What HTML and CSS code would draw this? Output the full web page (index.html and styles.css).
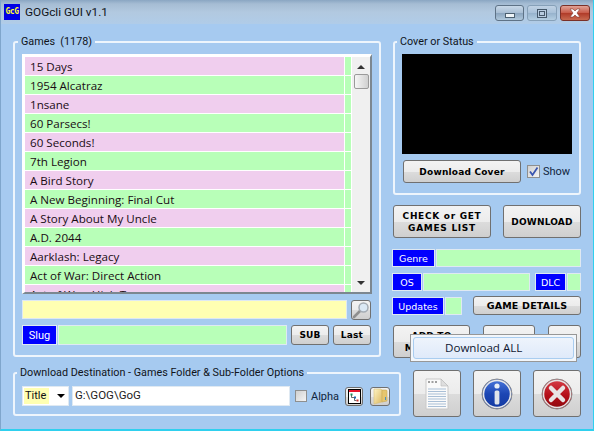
FILE: index.html
```html
<!DOCTYPE html>
<html lang="en">
<head>
<meta charset="utf-8">
<title>GOGcli GUI v1.1</title>
<link rel="stylesheet" href="styles.css">
</head>
<body>
<div class="window">
  <header class="titlebar">
    <span class="app-icon">GcG</span>
    <span class="title-text">GOGcli GUI v1.1</span>
    <div class="caption">
      <span class="cap cap-min"><i class="min-glyph"></i></span>
      <span class="cap cap-max"><i class="max-glyph"></i></span>
      <span class="cap cap-close">
        <svg width="18" height="10" viewBox="0 0 18 10"><path d="M4 1h3l2 2 2-2h3l-3 4 3 4h-3l-2-2-2 2H4l3-4z" fill="#fff" stroke="#7d3a30" stroke-width=".6"/></svg>
      </span>
    </div>
  </header>

  <main class="content">
    <div class="upper">
      <fieldset class="group games">
        <legend>Games&nbsp; (1178)</legend>
        <div class="listbox">
          <div class="rows">
            <div class="row pink"><span class="name">15 Days</span><span class="flag"></span></div>
            <div class="row green"><span class="name">1954 Alcatraz</span><span class="flag"></span></div>
            <div class="row pink"><span class="name">1nsane</span><span class="flag"></span></div>
            <div class="row green"><span class="name">60 Parsecs!</span><span class="flag"></span></div>
            <div class="row pink"><span class="name">60 Seconds!</span><span class="flag"></span></div>
            <div class="row green"><span class="name">7th Legion</span><span class="flag"></span></div>
            <div class="row pink"><span class="name">A Bird Story</span><span class="flag"></span></div>
            <div class="row green"><span class="name">A New Beginning: Final Cut</span><span class="flag"></span></div>
            <div class="row pink"><span class="name">A Story About My Uncle</span><span class="flag"></span></div>
            <div class="row green"><span class="name">A.D. 2044</span><span class="flag"></span></div>
            <div class="row pink"><span class="name">Aarklash: Legacy</span><span class="flag"></span></div>
            <div class="row green"><span class="name">Act of War: Direct Action</span><span class="flag"></span></div>
            <div class="row pink"><span class="name">Act of War: High Treason</span><span class="flag"></span></div>
          </div>
          <div class="scrollbar">
            <span class="arrow-up"></span>
            <span class="thumb"></span>
            <span class="arrow-down"></span>
          </div>
        </div>
        <div class="search-row">
          <div class="field yellow search-field"></div>
          <button class="btn search-btn" aria-label="Search">
            <svg width="18" height="18" viewBox="0 0 18 18"><path d="M2 16l6-6" stroke="#8f8f8f" stroke-width="2.600" stroke-linecap="round"/><circle cx="11.500" cy="6.500" r="4.500" fill="#dbe9f5" stroke="#a4acb4" stroke-width="1.500"/></svg>
          </button>
        </div>
        <div class="slug-row">
          <span class="tag slug-tag">Slug</span>
          <div class="field green-field slug-field"></div>
          <button class="btn small-btn">SUB</button>
          <button class="btn small-btn">Last</button>
        </div>
      </fieldset>

      <div class="side">
        <fieldset class="group cover">
          <legend>Cover or Status</legend>
          <div class="cover-image"></div>
          <div class="cover-row">
            <button class="btn cover-btn">Download Cover</button>
            <span class="check checked">
              <svg width="11" height="11" viewBox="0 0 11 11"><path d="M2 5.500l2.500 3.500L9.500 1.500" fill="none" stroke="#3a56b0" stroke-width="1.800"/></svg>
            </span>
            <span class="check-label">Show</span>
          </div>
        </fieldset>

        <div class="main-actions">
          <button class="btn check-btn">CHECK or GET<br>GAMES LIST</button>
          <button class="btn download-btn">DOWNLOAD</button>
        </div>

        <div class="info-row genre-row">
          <span class="tag genre-tag">Genre</span>
          <div class="field green-field grow"></div>
        </div>
        <div class="info-row os-row">
          <span class="tag os-tag">OS</span>
          <div class="field green-field grow"></div>
          <span class="tag dlc-tag">DLC</span>
          <div class="field green-field dlc-field"></div>
        </div>
        <div class="info-row updates-row">
          <span class="tag updates-tag">Updates</span>
          <div class="field green-field updates-field"></div>
          <button class="btn details-btn">GAME DETAILS</button>
        </div>

        <div class="extra-actions">
          <button class="btn add-btn">ADD TO<br>MANIFEST</button>
          <button class="btn mid-btn"></button>
          <button class="btn end-btn"></button>
          <div class="popup"><div class="popup-item">Download ALL</div></div>
        </div>
      </div>
    </div>

    <div class="lower">
      <fieldset class="group dest">
        <legend>Download Destination - Games Folder &amp; Sub-Folder Options</legend>
        <div class="dest-row">
          <div class="combo"><span class="combo-value">Title</span><span class="combo-arrow"></span></div>
          <div class="field white-field path-field">G:\GOG\GoG</div>
          <span class="check"></span>
          <span class="check-label alpha-label">Alpha</span>
          <button class="btn icon-btn tree-btn" aria-label="Tree">
            <svg class="btn-glyph" width="13" height="15" viewBox="0 0 13 15"><rect x=".5" y=".5" width="12" height="14" fill="#fff" stroke="#000"/><rect x="1" y="1" width="11" height="2" fill="#e8142c"/><path d="M3.500 6v2.500h3M6.500 8.500v3h2" stroke="#444" stroke-width=".8" fill="none"/><rect x="2.500" y="4.500" width="2" height="2" fill="#1a8a5a"/><rect x="6" y="7.500" width="2" height="2" fill="#1a6ab0"/><rect x="8.500" y="10.500" width="2" height="2" fill="#c83030"/></svg>
          </button>
          <button class="btn icon-btn folder-btn" aria-label="Folder">
            <svg class="btn-glyph" width="15" height="17" viewBox="0 0 15 17"><defs><linearGradient id="fold" x1="0" y1="0" x2="1" y2="1"><stop offset="0" stop-color="#fdf3c4"/><stop offset="1" stop-color="#dcb860"/></linearGradient></defs><path d="M1 1h7l1 1v12l-8 2z" fill="url(#fold)" stroke="#d8c078" stroke-width=".6"/><path d="M9 2h4.500l.5 1v10l-5 1z" fill="#e6c66e" stroke="#c9a850" stroke-width=".6"/><rect x="12" y="9" width="1" height="3" fill="#4a90c0"/></svg>
          </button>
        </div>
      </fieldset>
      <div class="big-actions">
        <button class="btn big-btn" aria-label="Notes">
          <svg width="24" height="32" viewBox="0 0 24 32"><path d="M1 1h15l7 7v23H1z" fill="#fafafa" stroke="#c8c8c8"/><path d="M16 1v7h7z" fill="#dedede" stroke="#bbb" stroke-width=".6"/><path d="M3 11h18M3 13.500h18M3 16h18M3 18.500h18M3 21h18M3 23.500h18M3 26h18M3 28.500h18" stroke="#a9bfd6"/><path d="M3 4h10" stroke="#a0a0a0" stroke-width="2" stroke-dasharray="2 1.500"/></svg>
        </button>
        <button class="btn big-btn" aria-label="Information">
          <svg width="32" height="32" viewBox="0 0 32 32"><defs><linearGradient id="blu" x1="0" y1="0" x2="0" y2="1"><stop offset="0" stop-color="#4a78dc"/><stop offset=".5" stop-color="#1c46b4"/><stop offset="1" stop-color="#1238a0"/></linearGradient></defs><circle cx="16" cy="16" r="15" fill="url(#blu)" stroke="#8a8a8a" stroke-width="1"/><circle cx="16" cy="16" r="13.500" fill="none" stroke="#e8e8e8" stroke-width="1.500"/><circle cx="16" cy="8" r="2.600" fill="#e8eef6"/><rect x="13.600" y="12.500" width="4.800" height="14" rx="1.600" fill="#dfe4ea"/></svg>
        </button>
        <button class="btn big-btn" aria-label="Close">
          <svg width="32" height="32" viewBox="0 0 32 32"><defs><linearGradient id="rd" x1="0" y1="0" x2="0" y2="1"><stop offset="0" stop-color="#d8404a"/><stop offset=".55" stop-color="#b40e18"/><stop offset="1" stop-color="#8c0a10"/></linearGradient></defs><circle cx="16" cy="16" r="15" fill="url(#rd)" stroke="#8a8a8a" stroke-width="1"/><circle cx="16" cy="16" r="13.500" fill="none" stroke="#e4e4e4" stroke-width="1.500"/><path d="M10 10l12 12M22 10L10 22" stroke="#e8e4e4" stroke-width="4.500" stroke-linecap="round"/></svg>
        </button>
      </div>
    </div>
  </main>
</div>
</body>
</html>
```
FILE: styles.css
```css
* { box-sizing: border-box; }
html, body { margin: 0; padding: 0; }
body { width: 594px; height: 431px; overflow: hidden; background: #a6caf0; font-family: Roboto, "Open Sans", sans-serif; font-size: 11px; color: #111; }
.window { width: 594px; height: 431px; display: flex; flex-direction: column; background: #a6caf0; border-bottom: 2px solid #2fd0ee; border-right: 1px solid #2fd0ee; border-left: 1px solid #7fa6cc; overflow: hidden; }

.titlebar { height: 24px; flex: none; display: flex; align-items: center; padding: 0 0 0 3px; background: linear-gradient(to bottom, #8aa6c2 0, #a6bdd4 4px, #b2c9e0 12px, #b0cce8 24px); }
.app-icon { width: 16px; height: 16px; background: #0000e6; color: #ffff30; font-family: "DejaVu Sans Mono", monospace; font-size: 8px; font-weight: bold; line-height: 15px; text-align: center; letter-spacing: -0.5px; }
.title-text { margin-left: 5px; font-size: 11.800px; color: #10141a; }
.caption { margin-left: auto; margin-right: 3px; display: flex; gap: 3px; align-self: flex-start; padding-top: 5px; }
.cap { height: 16px; border: 1px solid #5e7286; border-radius: 3px; display: flex; align-items: center; justify-content: center; }
.cap-min { width: 29px; background: linear-gradient(to bottom, #c8d8e8, #a8bed4 50%, #8aa4be 51%, #b0c8dc); }
.cap-max { width: 30px; background: linear-gradient(to bottom, #c0d2e4, #a8c0d8 50%, #96b2cc 51%, #b4cee2); border-color: #86a0b8; }
.cap-close { width: 30px; background: linear-gradient(to bottom, #e0a296, #c85a48 50%, #b03a28 51%, #c86a50); border-color: #7a3028; }
.min-glyph { width: 10px; height: 5px; margin-top: 5px; background: #eef4f8; border: 1px solid #4c6070; }
.max-glyph { width: 10px; height: 9px; background: #b8cce0; border: 1px solid #45586a; box-shadow: inset 0 0 0 1px #b8cce0, inset 0 0 0 2px #45586a; }

.content { flex: 1; padding: 10px 12px 0 12px; display: flex; flex-direction: column; }
.upper { display: flex; gap: 12px; height: 323px; align-items: flex-start; }
.lower { display: flex; gap: 12px; margin-top: 8px; align-items: flex-start; }

.group { margin: 0; min-width: 0; border: 2px solid #eef5fc; border-radius: 3px; padding: 0 8px 0 8px; }
.group legend { padding: 0 3px; margin-left: -5px; font-size: 10.800px; line-height: 16px; color: #10141a; }

.games { width: 368px; height: 323px; }
.listbox { width: 350px; height: 240px; margin-top: 4px; margin-left: -1px; display: flex; border: 3px solid #fff; border-right: 2px solid #7c8790; border-bottom: 2px solid #7c8790; background: #fff; overflow: hidden; }
.rows { flex: 1; display: flex; flex-direction: column; gap: 1px; overflow: hidden; }
.row { display: flex; flex: none; height: 18px; gap: 1px; }
.name { width: 320px; padding: 1px 0 0 5px; line-height: 18px; font-family: "Open Sans", sans-serif; font-size: 11.600px; color: #1a0c14; }
.flag { width: 6px; background: #b8ffb8; }
.pink .name { background: #f0ceee; }
.green .name { background: #b8ffb8; }
.scrollbar { width: 18px; flex: none; background: #f0f0f0; display: flex; flex-direction: column; align-items: center; padding-top: 8px; margin-left: 1px; }
.arrow-up { width: 0; height: 0; border: 4px solid transparent; border-top: 0; border-bottom: 4px solid #333; }
.thumb { width: 15px; height: 15px; margin-top: 5px; border: 1px solid #9a9a9a; border-radius: 2px; background: linear-gradient(to right, #f6f6f6, #d0d0d0); }
.arrow-down { width: 0; height: 0; margin-top: auto; margin-bottom: 7px; border: 4px solid transparent; border-bottom: 0; border-top: 4px solid #333; }

.field { border: 1px solid #dfe9f2; }
.yellow { background: #ffffb2; }
.green-field { background: #b8ffb8; }
.white-field { background: #fff; }
.grow { flex: 1; }

.search-row { display: flex; margin-top: 6px; margin-left: -1px; gap: 4px; height: 20px; align-items: flex-start; }
.search-field { width: 325px; height: 19px; }
.search-btn { width: 20px; height: 20px; padding: 0; display: flex; align-items: center; justify-content: center; }
.slug-row { display: flex; margin-top: 5px; margin-left: -1px; height: 20px; align-items: flex-start; }
.tag { background: #0000ff; color: #fff; display: flex; align-items: center; justify-content: center; border: 1px solid #dfe9f2; font-family: "DejaVu Sans", sans-serif; font-size: 9.500px; flex: none; }
.slug-tag { width: 35px; height: 20px; font-family: Roboto, sans-serif; font-size: 11px; }
.slug-field { width: 229px; height: 20px; margin-left: 1px; }
.small-btn { width: 38px; height: 20px; margin-left: 4px; }

.btn { border: 1px solid #707070; border-radius: 3px; background: linear-gradient(to bottom, #f3f3f3 0, #ececec 50%, #dcdcdc 51%, #cfcfcf 100%); font-family: "DejaVu Sans", Verdana, sans-serif; font-weight: bold; font-size: 9px; color: #000; padding: 0; line-height: 12px; letter-spacing: 0.2px; }

.side { width: 188px; display: flex; flex-direction: column; }
.cover { width: 188px; height: 161px; padding: 0 7px; }
.cover-image { width: 170px; height: 100px; margin-top: 4px; background: #000; }
.cover-row { display: flex; align-items: center; margin-top: 6px; margin-left: 1px; }
.cover-btn { width: 118px; height: 23px; }
.check { width: 13px; height: 13px; border: 1px solid #8e8f8f; background: linear-gradient(135deg, #d0d0d0, #f4f4f4); display: flex; align-items: center; justify-content: center; flex: none; }
.cover-row .check { margin-left: 6px; }
.check-label { margin-left: 3px; font-size: 11px; color: #10243c; }

.main-actions { display: flex; justify-content: space-between; margin-top: 10px; }
.check-btn { width: 98px; height: 33px; letter-spacing: 0.7px; }
.download-btn { width: 78px; height: 33px; }

.info-row { display: flex; margin-left: -1px; }
.genre-row { margin-top: 11px; }
.os-row { margin-top: 6px; }
.updates-row { margin-top: 6px; }
.info-row .tag, .info-row .field { height: 18px; }
.genre-tag { width: 43px; }
.os-tag { width: 30px; }
.dlc-tag { width: 31px; margin-left: 5px; }
.dlc-field { width: 14px; margin-left: 1px; }
.updates-tag { width: 52px; }
.updates-field { width: 17px; margin-left: 1px; }
.genre-row .grow, .os-row .grow { margin-left: 1px; }
.details-btn { width: 108px; height: 19px; margin-left: auto; margin-top: -1px; font-size: 9.500px; }

.extra-actions { display: flex; margin-top: 10px; position: relative; height: 33px; }
.add-btn { width: 77px; height: 33px; }
.mid-btn { width: 52px; height: 33px; margin-left: 13px; }
.end-btn { width: 33px; height: 33px; margin-left: 13px; }
.popup { position: absolute; left: 17px; top: 9px; width: 167px; height: 28px; background: #f2f6fb; border: 1px solid #979797; padding: 2px; }
.popup-item { height: 22px; border: 1px solid #a9cdf0; border-radius: 3px; background: linear-gradient(to bottom, #eef4fc, #dfeafa); padding-left: 31px; font-family: "Open Sans", sans-serif; font-size: 11.600px; line-height: 20px; color: #101830; }

.dest { width: 388px; height: 51px; padding: 0 7px; }
.dest-row { display: flex; align-items: center; margin-top: 5px; height: 20px; }
.combo { width: 47px; height: 20px; background: #fff; border: 1px solid #dfe9f2; display: flex; align-items: center; padding: 1px; }
.combo-value { width: 25px; height: 16px; background: #ffffb2; padding-left: 1px; line-height: 15px; }
.combo-arrow { margin-left: 8px; width: 0; height: 0; border: 4px solid transparent; border-bottom: 0; border-top: 4px solid #000; }
.path-field { width: 218px; height: 20px; margin-left: 3px; padding-left: 2px; line-height: 17px; font-size: 11.500px; color: #222; }
.dest-row .check { margin-left: 5px; width: 12px; height: 12px; }
.alpha-label { margin-left: 4px; flex: none; width: 34px; }
.icon-btn { width: 18px; height: 19px; flex: none; display: flex; align-items: center; justify-content: center; }
.folder-btn { width: 20px; margin-left: 7px; }
.btn-glyph { flex: none; display: block; }

.big-actions { display: flex; gap: 12px; margin-top: 5px; }
.big-btn { width: 48px; height: 47px; display: flex; align-items: center; justify-content: center; }
```
